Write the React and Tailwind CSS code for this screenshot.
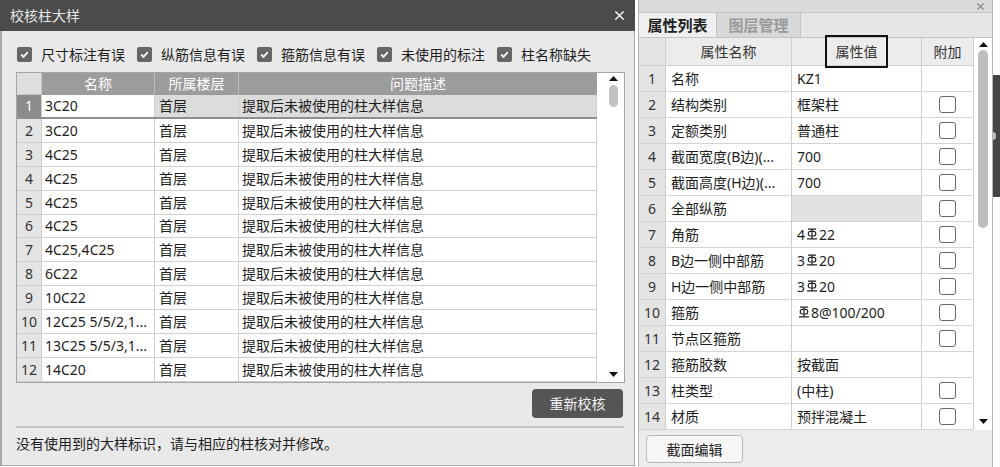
import { X } from "lucide-react";

const leftRows = [
  "3C20",
  "3C20",
  "4C25",
  "4C25",
  "4C25",
  "4C25",
  "4C25,4C25",
  "6C22",
  "10C22",
  "12C25 5/5/2,1...",
  "13C25 5/5/3,1...",
  "14C20",
];

const filters = ["尺寸标注有误", "纵筋信息有误", "箍筋信息有误", "未使用的标注", "柱名称缺失"];

function Rebar() {
  return (
    <svg width="12" height="12" viewBox="0 0 12 12" className="inline-block align-top -mt-[1px] mx-[1px]">
      <path d="M2 1.2H10M1 10.8H11M6 0.5V10.8" stroke="#222" strokeWidth="1.2" fill="none" />
      <rect x="2.3" y="3.4" width="7.4" height="4.6" rx="2" stroke="#222" strokeWidth="1.2" fill="none" />
    </svg>
  );
}

const props = [
  ["名称", "KZ1", false],
  ["结构类别", "框架柱", true],
  ["定额类别", "普通柱", true],
  ["截面宽度(B边)(...", "700", true],
  ["截面高度(H边)(...", "700", true],
  ["全部纵筋", "", true, true],
  ["角筋", <>4<Rebar />22</>, true],
  ["B边一侧中部筋", <>3<Rebar />20</>, true],
  ["H边一侧中部筋", <>3<Rebar />20</>, true],
  ["箍筋", <><Rebar />8@100/200</>, true],
  ["节点区箍筋", "", true],
  ["箍筋胶数", "按截面", false],
  ["柱类型", "(中柱)", true],
  ["材质", "预拌混凝土", true],
];

function CheckMark() {
  return (
    <span className="w-[15px] h-[15px] rounded-[2px] bg-[#666] flex items-center justify-center">
      <svg width="11" height="11" viewBox="0 0 11 11">
        <path d="M2.2 5.6L4.5 7.9L8.8 3.2" stroke="#fff" strokeWidth="1.8" fill="none" />
      </svg>
    </span>
  );
}

function Arrow({ up }) {
  return (
    <svg width="9" height="5" viewBox="0 0 9 5">
      <path d={up ? "M0 5L4.5 0L9 5Z" : "M0 0L4.5 5L9 0Z"} fill="#111" />
    </svg>
  );
}

export default function App() {
  return (
    <div className="w-[1000px] h-[467px] flex bg-white text-[14px] text-[#1e1e1e] font-['Noto_Sans','Noto_Sans_CJK_SC',sans-serif] overflow-hidden">
      {/* left dialog */}
      <div className="w-[635px] h-[466px] flex flex-col">
        <div className="h-[31px] bg-[#4b4b4b] flex items-center justify-between pl-[10px] pr-[8px]">
          <span className="text-[#e6e6e6]">校核柱大样</span>
          <X size={15} strokeWidth={2.4} color="#f2f2f2" />
        </div>
        <div className="flex-1 bg-[#e9e9e9] border-l-[2px] border-r border-b border-[#a9a9a9] flex flex-col pl-[14px] pr-[10px]">
          <div className="mt-[16px] h-[15px] flex items-center gap-[12px] pl-[1px]">
            {filters.map((f) => (
              <div key={f} className="flex items-center gap-[9px] leading-none">
                <CheckMark />
                <span>{f}</span>
              </div>
            ))}
          </div>

          <div className="mt-[10px] w-[609px] h-[311px] border border-[#a5a5a5] flex bg-white">
            <div className="w-[580px] flex flex-col">
              <div className="h-[22px] flex text-white">
                <div className="w-[25px] bg-[#dedede] border-r border-b border-[#c6c6c6]" />
                <div className="w-[113px] bg-[#9c9c9c] border-r border-[#bcbcbc] flex items-center justify-center">名称</div>
                <div className="w-[84px] bg-[#9c9c9c] border-r border-[#bcbcbc] flex items-center justify-center">所属楼层</div>
                <div className="w-[358px] bg-[#9c9c9c] flex items-center justify-center">问题描述</div>
              </div>
              {leftRows.map((name, i) => {
                const sel = i === 0;
                return (
                  <div
                    key={i}
                    className={`h-[24px] flex border-b ${sel ? "border-[#8f8f8f] border-b-[2px]" : "border-[#cfcfcf]"}`}
                  >
                    <div
                      className={`w-[25px] flex items-center justify-center border-r border-[#cfcfcf] ${sel ? "bg-[#8c8c8c] text-white" : "bg-[#e4e4e4] text-[#333]"}`}
                    >
                      {i + 1}
                    </div>
                    <div className="w-[113px] pl-[3px] flex items-center border-r border-[#cfcfcf] bg-white whitespace-nowrap">
                      {name}
                    </div>
                    <div className={`w-[84px] pl-[4px] flex items-center border-r border-[#cfcfcf] ${sel ? "bg-[#dcdcdc]" : "bg-white"}`}>
                      首层
                    </div>
                    <div className={`w-[358px] pl-[3px] flex items-center border-r border-[#cfcfcf] ${sel ? "bg-[#dcdcdc]" : "bg-white"}`}>
                      提取后未被使用的柱大样信息
                    </div>
                  </div>
                );
              })}
            </div>
            <div className="flex-1 flex flex-col items-center pt-[3px] pb-[5px] pl-[6px]">
              <Arrow up />
              <div className="mt-[4px] w-[9px] h-[22px] rounded-full bg-[#c2c2c2]" />
              <div className="flex-1" />
              <Arrow />
            </div>
          </div>

          <div className="mt-[6px] flex justify-end pr-[1px]">
            <button className="w-[91px] h-[29px] rounded-[4px] bg-[#555] text-[#f2f2f2]">重新校核</button>
          </div>
          <div className="mt-[8px] h-[2px] w-[608px] bg-[#c6c6c6]" />
          <div className="mt-[5px] h-[20px] flex items-center">没有使用到的大样标识，请与相应的柱核对并修改。</div>
        </div>
      </div>

      {/* right panel */}
      <div className="ml-[3px] w-[355px] h-[467px] border-l border-r border-[#b5b5b5] bg-[#ececec] flex flex-col">
        <div className="h-[12px] bg-[#dadada] flex items-center justify-end pr-[6px]">
          <X size={11} strokeWidth={2.4} color="#8a8a8a" />
        </div>
        <div className="h-[26px] flex border-t border-b border-[#c4c4c4] bg-[#e6e6e6]">
          <div className="w-[78px] bg-[#efefef] border-r border-[#c4c4c4] flex items-center justify-center font-bold text-[#222] text-[15px]">
            属性列表
          </div>
          <div className="w-[84px] bg-[#d8d8d8] border-r border-[#c4c4c4] flex items-center justify-center font-bold text-[#9a9a9a] text-[15px]">
            图层管理
          </div>
        </div>
        <div className="flex bg-white">
          <div className="w-[335px] flex flex-col">
            <div className="h-[28px] flex bg-[#ececec] text-[#333]">
              <div className="w-[27px] border-r border-b border-[#cfcfcf] bg-[#e4e4e4]" />
              <div className="w-[126px] border-r border-b border-[#cfcfcf] flex items-center justify-center">属性名称</div>
              <div className="w-[130px] border-r border-b border-[#cfcfcf] flex items-center justify-center">
                <span className="h-[33px] w-[63px] -mt-[1px] border-[2px] border-[#111] flex items-center justify-center">属性值</span>
              </div>
              <div className="w-[52px] border-r border-b border-[#cfcfcf] flex items-center justify-center">附加</div>
            </div>
            {props.map(([name, value, box, grey], i) => (
              <div key={i} className="h-[26px] flex border-b border-[#d4d4d4]">
                <div className="w-[27px] bg-[#e4e4e4] border-r border-[#cfcfcf] flex items-center justify-center text-[#333]">
                  {i + 1}
                </div>
                <div className="w-[126px] pl-[5px] border-r border-[#cfcfcf] flex items-center whitespace-nowrap">{name}</div>
                <div className={`w-[130px] pl-[5px] border-r border-[#cfcfcf] flex items-center whitespace-nowrap ${grey ? "bg-[#e2e2e2]" : ""}`}>
                  {value}
                </div>
                <div className="w-[52px] border-r border-[#cfcfcf] flex items-center justify-center">
                  {box && <span className="w-[17px] h-[17px] rounded-[3px] border border-[#6a6a6a] bg-white" />}
                </div>
              </div>
            ))}
          </div>
          <div className="flex-1 flex flex-col items-center pt-[4px] pb-[6px]">
            <Arrow up />
            <div className="mt-[3px] w-[10px] h-[178px] rounded-full bg-[#bdbdbd]" />
            <div className="flex-1" />
            <Arrow />
          </div>
        </div>
        <div className="pl-[7px] pt-[5px]">
          <button className="w-[97px] h-[28px] rounded-[4px] border border-[#b9b9b9] bg-[#f6f6f6] text-[#222]">截面编辑</button>
        </div>
      </div>

      <div className="flex-1 flex flex-col">
        <div className="mt-[75px] h-[122px] bg-[#454545] flex items-center">
          <div className="w-[3px] h-[8px] bg-[#bcbcbc] rounded-r" />
        </div>
      </div>
    </div>
  );
}
